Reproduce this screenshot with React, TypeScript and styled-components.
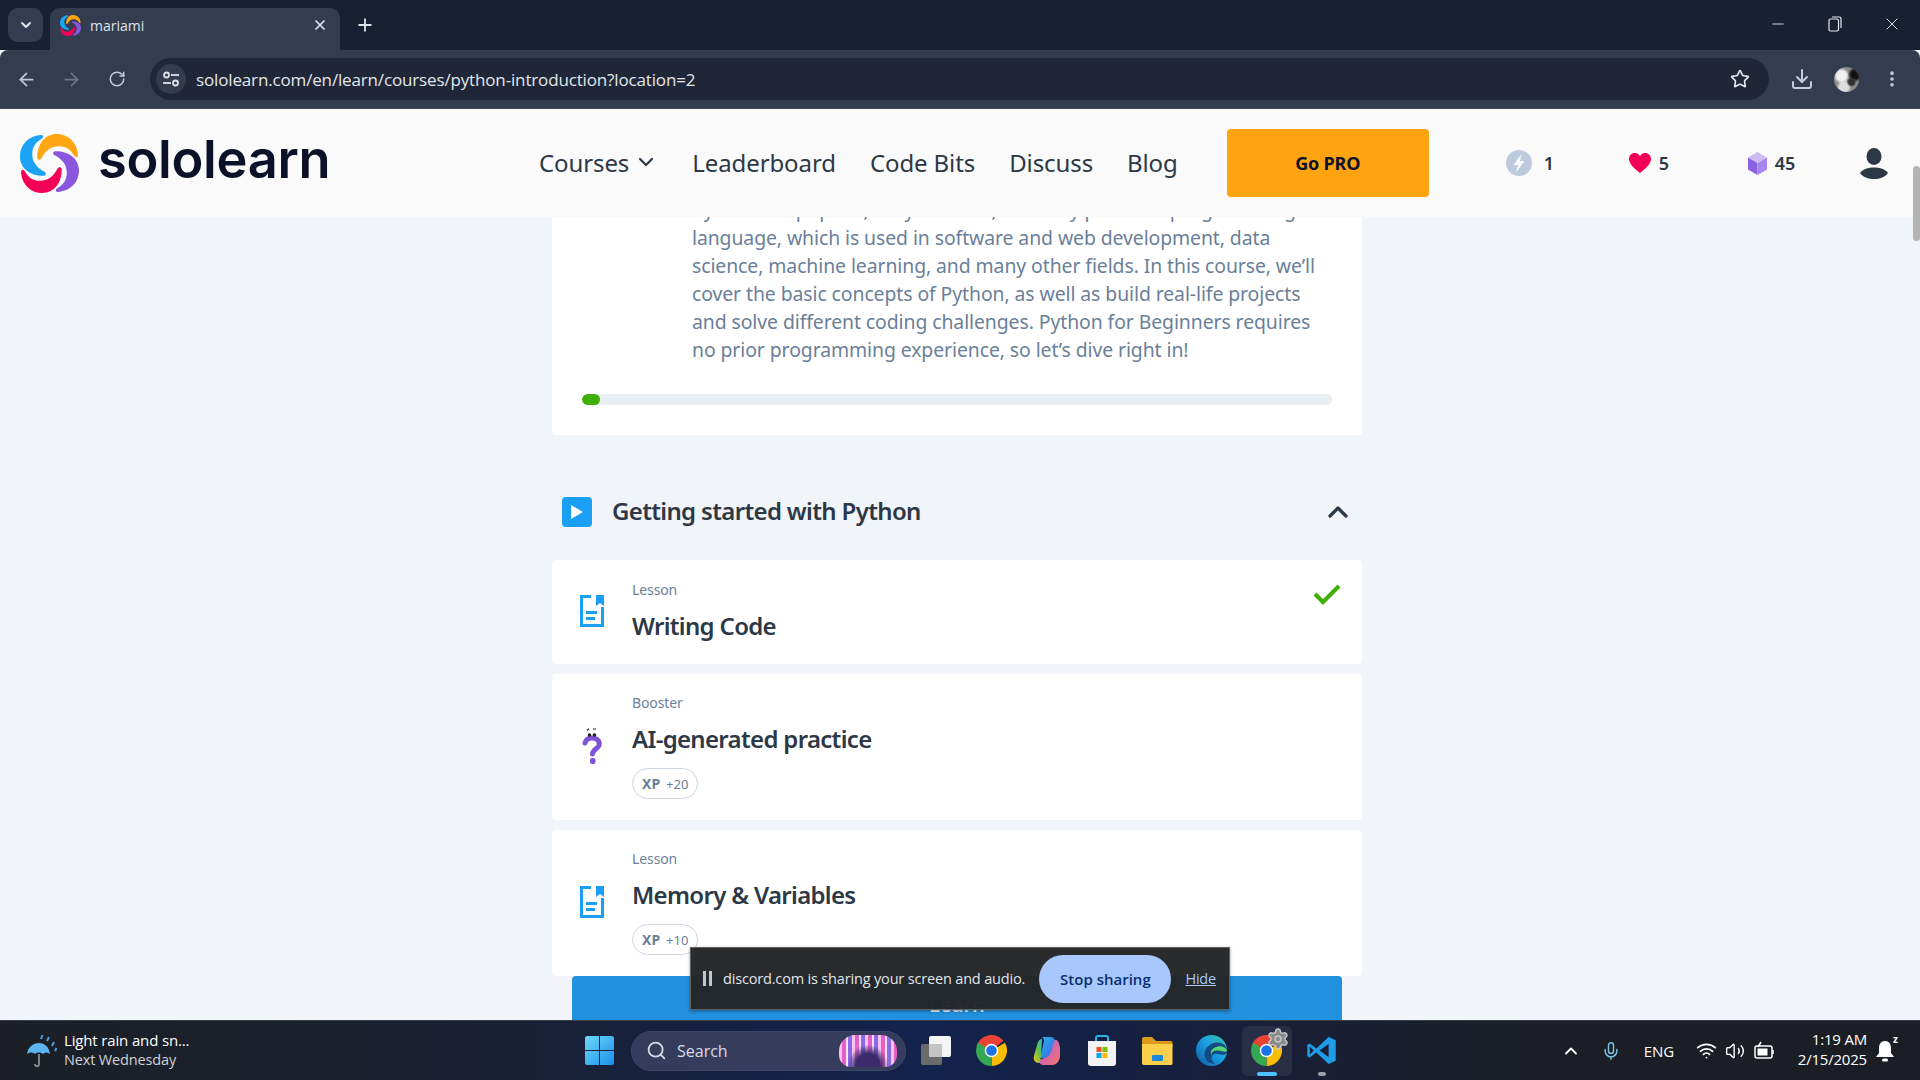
import React from "react";
import styled, { createGlobalStyle } from "styled-components";
import { ArrowLeft, ArrowRight, RotateCw, Star, Download, EllipsisVertical, X, Plus, ChevronDown, ChevronUp, Minus, Search, Mic, Wifi, Volume2, Settings } from "lucide-react";

const Global = createGlobalStyle`
  html, body { margin: 0; padding: 0; height: 100%; overflow: hidden; background: #f1f4f8; }
  #root { height: 100%; }
  * { box-sizing: border-box; }
`;

const sysFont = `"Open Sans", "Noto Sans", sans-serif`;
const siteFont = `"Noto Sans", "Open Sans", sans-serif`;

const Window = styled.div`
  height: 100vh; display: flex; flex-direction: column; overflow: hidden;
  font-family: ${siteFont};
`;
const TabStrip = styled.div`
  height: 50px; flex: none; display: flex; background: #182132; padding-left: 8px; color: #dfe3ea;
`;
const TabMenu = styled.div`
  width: 35px; height: 34px; margin-top: 8px; border-radius: 10px; background: #343d4f;
  display: flex; align-items: center; justify-content: center;
`;
const Tab = styled.div`
  width: 290px; height: 42px; margin: 8px 0 0 7px; background: #343d4f; border-radius: 10px 10px 0 0;
  display: flex; align-items: center; padding: 0 12px 8px 10px; gap: 9px;
  font: 400 14px ${sysFont}; color: #dfe3ea;
`;
const TabTitle = styled.span`flex: 1;`;
const NewTab = styled.div`
  width: 50px; height: 42px; margin-top: 4px; display: flex; align-items: center; justify-content: center;
`;
const Spacer = styled.div`flex: 1;`;
const WinControls = styled.div`
  display: flex; height: 50px; color: #e8ebf0;
`;
const WinButton = styled.div`
  width: 57px; display: flex; align-items: center; justify-content: center; padding-bottom: 2px;
`;
const Toolbar = styled.div`
  height: 59px; flex: none; background: #343d4f; border-bottom: 1px solid #3b4352; display: flex;
  padding: 8px 0 0 4px; border-radius: 8px 8px 0 0; color: #c4cad6;
`;
const NavIcon = styled.div<{ $dim?: boolean }>`
  width: 45px; height: 42px; display: flex; align-items: center; justify-content: center;
  color: ${p => (p.$dim ? "#6d7585" : "#c4cad6")};
`;
const AddressBar = styled.div`
  width: 1619px; height: 42px; margin-left: 11px; background: #1e2637; border-radius: 21px;
  display: flex; align-items: center; padding: 0 19px 0 6px; color: #e3e6ec;
  font: 400 17px ${sysFont};
`;
const SiteInfo = styled.div`
  width: 30px; height: 30px; border-radius: 50%; background: #343d4f; display: flex; align-items: center; justify-content: center;
  margin-right: 10px;
`;
const Url = styled.span`flex: 1; letter-spacing: -0.15px;`;
const ToolIcons = styled.div`
  display: flex; align-items: center; height: 42px; margin-left: 15px; gap: 10px;
`;
const ToolIcon = styled.div`
  width: 35px; display: flex; align-items: center; justify-content: center;
`;
const Avatar = styled.div`
  width: 25px; height: 25px; border-radius: 50%;
  background:
    radial-gradient(circle at 70% 60%, #333 0 12%, transparent 22%),
    radial-gradient(circle at 85% 30%, #111 0 15%, transparent 28%),
    radial-gradient(circle at 30% 35%, #f2f2f2 0 20%, transparent 34%),
    radial-gradient(circle at 40% 80%, #ddd 0 18%, transparent 30%),
    #8a8a8a;
`;

const Page = styled.div`
  flex: 1; min-height: 0; position: relative; display: flex; flex-direction: column; overflow: hidden; background: #f1f4f8;
`;
const SiteHeader = styled.header`
  height: 108px; flex: none; background: #fafafa; position: relative; z-index: 2; display: flex; align-items: center; padding-left: 20px;
`;
const Logo = styled.div`
  display: flex; align-items: center; width: 519px; gap: 19px;
`;
const Wordmark = styled.span`
  font: 600 52.4px Inter, sans-serif; color: #0a1128; letter-spacing: -0.3px; line-height: 60px; margin-top: -8px;
`;
const Nav = styled.nav`
  display: flex; align-items: center; gap: 34px; font: 400 24px ${siteFont}; color: #2d3846; letter-spacing: -0.1px; padding-bottom: 2px;
`;
const NavItem = styled.span`display: flex; align-items: center; gap: 5px;`;
const GoPro = styled.div`
  width: 202px; height: 68px; margin-left: 49px; background: #ffa310; border-radius: 4px; color: #0d1326;
  display: flex; align-items: center; justify-content: center; font: 700 18px ${siteFont}; letter-spacing: -0.2px;
`;
const Stat = styled.div<{ $w: number; $gap: number }>`
  width: ${p => p.$w}px; display: flex; align-items: center; gap: ${p => p.$gap}px; font: 600 18px ${siteFont}; color: #2d3846;
`;
const Stats = styled.div`
  display: flex; align-items: center; margin-left: 77px;
`;
const Scroller = styled.main`
  flex: 1; min-height: 0; overflow: hidden; padding-right: 6px;
`;
const Column = styled.div`
  width: 810px; margin: -21px auto 0;
`;
const IntroCard = styled.section`
  background: #fff; border-radius: 4px; padding: 0 30px 30px;
`;
const IntroText = styled.p`
  margin: 0 0 0 110px; font: 400 19.4px/28px ${siteFont}; color: #6b7f99; letter-spacing: -0.08px; width: 636px;
`;
const ProgressTrack = styled.div`
  height: 11px; margin-top: 30px; background: #e9eef3; border-radius: 6px; overflow: hidden;
`;
const ProgressFill = styled.div`
  height: 100%; background: #3fb005; border-radius: 6px;
`;
const SectionHead = styled.div`
  height: 30px; margin-top: 62px; padding: 0 8px 0 10px; display: flex; align-items: center; gap: 20px;
  color: #2d3846;
`;
const SectionTitle = styled.h2`
  flex: 1; margin: 0; padding-bottom: 3px; font: 600 24px ${siteFont}; letter-spacing: -0.66px;
`;
const PlayBox = styled.div`
  width: 30px; height: 30px; border-radius: 4px; background: #1a9ff4; display: flex; align-items: center; justify-content: center;
`;
const Lessons = styled.div`
  margin-top: 33px; display: flex; flex-direction: column; gap: 10px;
`;
const LessonCard = styled.article`
  position: relative; background: #fff; border-radius: 4px; min-height: 104px; display: flex; align-items: center; gap: 28px;
  padding: 19px 28px 21px;
`;
const LessonBody = styled.div`display: flex; flex-direction: column; align-items: flex-start;`;
const LessonKind = styled.span`
  font: 400 14px/20px ${siteFont}; color: #6b7f99; letter-spacing: -0.1px;
`;
const LessonName = styled.h3`
  margin: 9px 0 0; font: 600 24px/34px ${siteFont}; color: #2d3846; letter-spacing: -0.68px;
`;
const XpBadge = styled.div`
  height: 31px; margin-top: 12px; padding: 0 9px; border: 1px solid #cdd6e0; border-radius: 16px;
  display: flex; align-items: center; gap: 6px; font: 400 13px ${siteFont}; color: #6b7f99;
`;
const XpLabel = styled.b`font-weight: 700; font-size: 14px;`;
const DoneMark = styled.div`
  position: absolute; right: 21px; top: 24px; color: #3fb005; display: flex;
`;
const LearnBar = styled.div`
  position: absolute; left: 572px; bottom: 0; width: 770px; height: 44px; background: #2190de; border-radius: 4px 4px 0 0;
  display: flex; justify-content: center; padding-top: 15px; color: #e8f2fb; font: 600 20px ${siteFont}; z-index: 1;
`;
const ShareBar = styled.div`
  position: absolute; left: 690px; bottom: 10px; width: 540px; height: 63px; z-index: 3; background: rgba(34, 36, 38, 0.97);
  border: 1.5px solid #5f6163; box-shadow: 0 1px 3px rgba(0,0,0,.4); display: flex; align-items: center; padding: 0 13px 0 12px;
  font: 400 14.5px ${sysFont}; color: #e4e6e8;
`;
const PauseGlyph = styled.div`
  width: 9px; height: 15px; border-left: 3px solid #c4c6c8; border-right: 3px solid #c4c6c8; margin-right: 11px;
`;
const ShareText = styled.span`flex: 1; letter-spacing: -0.17px; white-space: nowrap;`;
const StopButton = styled.div`
  width: 132px; height: 48px; border-radius: 24px; background: #a8c7fa; color: #062e6f; font-weight: 600; font-size: 15px;
  display: flex; align-items: center; justify-content: center; margin-right: 14px; letter-spacing: 0;
`;
const HideLink = styled.span`
  color: #a8c7fa; text-decoration: underline; font-size: 14.5px; letter-spacing: -0.2px;
`;
const ScrollThumb = styled.div`
  position: absolute; right: 0; top: 57px; width: 7px; height: 75px; background: #b4b4b4; border-radius: 4px; z-index: 4;
`;

const Taskbar = styled.footer`
  height: 60px; flex: none; border-top: 1px solid #3a3f4a; display: flex; align-items: center;
  background: linear-gradient(90deg, #1b1f25 0%, #1a2030 22%, #12234d 48%, #181f38 66%, #1b1e25 80%, #1b1e25 100%);
  color: #fff; font-family: ${sysFont};
`;
const Weather = styled.div`
  flex: none; width: 585px; padding-left: 25px; display: flex; align-items: center; gap: 7px;
`;
const WeatherText = styled.div`
  display: flex; flex-direction: column; font-size: 15px; line-height: 20px; letter-spacing: -0.15px; color: #fff; padding-bottom: 2px;
`;
const WeatherSub = styled.span`color: #cfd2d8; font-size: 14.5px;`;
const SearchPill = styled.div`
  flex: none; width: 275px; height: 40px; margin: 0 3px 0 17px; border-radius: 20px; background: #353c5c; border: 1px solid #3f4769;
  display: flex; align-items: center; padding: 0 8px 0 14px; gap: 10px; color: #d9dce6; font-size: 16px;
`;
const SearchWord = styled.span`flex: 1;`;
const SearchArt = styled.div`
  width: 58px; height: 32px; border-radius: 16px 16px 12px 12px;
  background:
    radial-gradient(ellipse at 50% 100%, #3b2a6b 0 30%, transparent 50%),
    repeating-linear-gradient(90deg, #f6c3ee 0 3px, #e55fc6 3px 7px, #ffe2f4 7px 9px, #8a6ae6 9px 13px),
    #9fb4dd;
`;
const Dock = styled.div`
  flex: none; display: flex; align-items: center;
`;
const DockItem = styled.div<{ $active?: boolean }>`
  width: ${p => (p.$active ? 50 : 55)}px; margin: 0 ${p => (p.$active ? 2.5 : 0)}px;
  height: 50px; display: flex; align-items: center; justify-content: center; position: relative;
  border-radius: 6px; background: ${p => (p.$active ? "rgba(255,255,255,.07)" : "transparent")};
`;
const RunDot = styled.div<{ $color: string; $w: number }>`
  position: absolute; bottom: 0; left: 50%; transform: translateX(-50%); height: 3.5px; width: ${p => p.$w}px; border-radius: 2px; background: ${p => p.$color};
`;
const GearBadge = styled.div`
  position: absolute; right: 2px; top: 1px; width: 24px; height: 24px; color: #8a8a8a; display: flex;
`;
const Tray = styled.div`
  flex: 1; display: flex; align-items: center; padding-left: 202px; color: #fff; font-size: 15px;
`;
const TrayIcon = styled.div<{ $w: number }>`
  flex: none; width: ${p => p.$w}px; display: flex; align-items: center; justify-content: center;
`;
const Clock = styled.div`
  flex: none; width: 82px; padding-bottom: 4px; text-align: right; line-height: 20px; font-size: 15px; letter-spacing: -0.2px; white-space: nowrap;
`;
const BellWrap = styled.div`
  position: relative; display: flex; margin-right: 2px;
`;
const BellZ = styled.span`
  position: absolute; right: -3px; top: -5px; font-size: 10px; font-weight: 700; line-height: 10px; color: #fff;
`;

const Swirl = ({ size }: { size: number }) => {
  const petal = "M20 1C8 2 0 11 0 22C0 33 9 41 23 41C26 41 26 38 24 37C16 33 12 27 12 20C12 12 16 8 21 5C24 3 23 1 20 1Z";
  return (
    <svg width={size} height={size} viewBox="0 0 58 58">
      <path d={petal} fill="#1aa3f5" />
      <path d={petal} fill="#ffa613" transform="rotate(90 29 29)" />
      <path d={petal} fill="#8a56de" transform="rotate(180 29 29)" />
      <path d={petal} fill="#f40055" transform="rotate(270 29 29)" />
    </svg>
  );
};

const DocIcon = () => (
  <svg width="24" height="32" viewBox="0 0 24 32" fill="none">
    <path d="M11 1.5H1.5V30.5H22.5V12" stroke="#1a9ff4" strokeWidth="3" />
    <path d="M16 0H24V11L20 8L16 11Z" fill="#1a9ff4" />
    <rect x="6" y="16" width="11" height="3" fill="#1a9ff4" />
    <rect x="6" y="22" width="9" height="3" fill="#1a9ff4" />
  </svg>
);
const BoosterIcon = () => (
  <svg width="24" height="36" viewBox="0 0 24 36" fill="none">
    <path d="M5 15C6 11 9 9.5 13 10C18 10.500 20 14 19 17.500C18 20.500 13 21 12.500 26" stroke="#8052d8" strokeWidth="5" strokeLinecap="round" />
    <rect x="10" y="30" width="5.500" height="6" rx="2" fill="#8052d8" />
    <circle cx="9.500" cy="7" r="1.800" fill="#222" />
    <circle cx="14.500" cy="7" r="1.800" fill="#222" />
    <path d="M7 2.500L9 0.800M13 1H16" stroke="#222" strokeWidth="1.200" />
  </svg>
);
const BoltBadge = () => (
  <svg width="26" height="26" viewBox="0 0 26 26">
    <circle cx="13" cy="13" r="13" fill="#bdcadb" />
    <path d="M15.5 4L7.5 15H12L10 22.5L18.5 11H14Z" fill="#fafafa" />
  </svg>
);
const HeartBadge = () => (
  <svg width="22" height="20" viewBox="0 0 22 20">
    <path d="M11 20C5 15 0 11 0 6C0 2.5 2.5 0 5.7 0C8 0 9.9 1.2 11 3.2C12.1 1.2 14 0 16.3 0C19.5 0 22 2.5 22 6C22 11 17 15 11 20Z" fill="#f40055" />
  </svg>
);
const CubeBadge = () => (
  <svg width="19" height="23" viewBox="0 0 19 23">
    <path d="M9.5 0L19 5.5L9.5 11L0 5.5Z" fill="#cdbdf3" />
    <path d="M0 5.5L9.5 11V23L0 17.5Z" fill="#8a60e4" />
    <path d="M19 5.5L9.5 11V23L19 17.5Z" fill="#a585ee" />
  </svg>
);
const UserIcon = () => (
  <svg width="28" height="31" viewBox="0 0 28 31">
    <ellipse cx="14" cy="8.5" rx="7.5" ry="8.5" fill="#2d3846" />
    <path d="M0 25C3 21 8 19.5 14 19.5C20 19.5 25 21 28 25C25 29 20 31 14 31C8 31 3 29 0 25Z" fill="#2d3846" />
  </svg>
);
const ChromeLogo = () => (
  <svg width="31" height="31" viewBox="0 0 48 48">
    <g fill="none" strokeWidth="17">
      <circle cx="24" cy="24" r="15.5" pathLength="3" stroke="#ea4335" strokeDasharray="1.05 1.95" transform="rotate(-165 24 24)" />
      <circle cx="24" cy="24" r="15.5" pathLength="3" stroke="#fbbc04" strokeDasharray="1 2" transform="rotate(-30 24 24)" />
      <circle cx="24" cy="24" r="15.5" pathLength="3" stroke="#34a853" strokeDasharray="1 2" transform="rotate(90 24 24)" />
    </g>
    <circle cx="24" cy="24" r="10.5" fill="#fff" />
    <circle cx="24" cy="24" r="8.2" fill="#1a73e8" />
  </svg>
);
const Copilot = () => (
  <svg width="30" height="30" viewBox="0 0 30 30">
    <defs>
      <linearGradient id="cpA" x1="0" y1="0" x2="1" y2="1"><stop offset="0" stopColor="#2bb6f0" /><stop offset="1" stopColor="#3b5fe0" /></linearGradient>
      <linearGradient id="cpB" x1="0" y1="1" x2="1" y2="0"><stop offset="0" stopColor="#f8c21d" /><stop offset=".5" stopColor="#5fc04a" /><stop offset="1" stopColor="#2bb6f0" /></linearGradient>
      <linearGradient id="cpC" x1="0" y1="0" x2="1" y2="1"><stop offset="0" stopColor="#b25ce0" /><stop offset="1" stopColor="#f5736a" /></linearGradient>
    </defs>
    <path d="M10 1H19C22 1 23 4 24 8L20 22H8L12 5C12 3 11 1 10 1Z" fill="url(#cpA)" />
    <path d="M10 3C7 3 6 6 5 9L2 20C1 24 3 27 7 27H12C9 26 8 24 9 20Z" fill="url(#cpB)" />
    <path d="M20 29H11C8 29 7 26 8 24L12 22C17 22 20 15 21 8L23 4C25 3 27 6 28 11L28 21C27 26 24 29 20 29Z" fill="url(#cpC)" />
  </svg>
);
const StoreBag = () => (
  <svg width="30" height="32" viewBox="0 0 30 32">
    <path d="M9 7V3C9 1.5 10 1 11 1H19C20 1 21 1.5 21 3V7" fill="none" stroke="#27b4e8" strokeWidth="2" />
    <path d="M1 6H29V28C29 30 28 31 26 31H4C2 31 1 30 1 28Z" fill="#f1f3f5" />
    <rect x="9.5" y="12" width="5" height="5" fill="#f25022" />
    <rect x="15.5" y="12" width="5" height="5" fill="#7fba00" />
    <rect x="9.5" y="18" width="5" height="5" fill="#00a4ef" />
    <rect x="15.5" y="18" width="5" height="5" fill="#ffb900" />
  </svg>
);
const Folder = () => (
  <svg width="32" height="28" viewBox="0 0 32 28">
    <path d="M1 2C1 1 1.5 0 3 0H11L15 4H30C31 4 31.5 5 31.5 6V10H1Z" fill="#d99a1c" />
    <path d="M1 7H31.500V26C31.500 27 31 28 30 28H3C1.500 28 1 27 1 26Z" fill="#fcd04a" />
    <rect x="11" y="18" width="11" height="6" rx="1" fill="#1a86d8" />
  </svg>
);
const Edge = () => (
  <svg width="31" height="31" viewBox="0 0 32 32">
    <defs>
      <linearGradient id="edA" x1="0" y1="1" x2="1" y2="0"><stop offset="0" stopColor="#0c59a4" /><stop offset=".55" stopColor="#1ba1e2" /><stop offset="1" stopColor="#36c7a0" /></linearGradient>
    </defs>
    <circle cx="16" cy="16" r="16" fill="url(#edA)" />
    <path d="M32 17C32 10 26 7 20 8C13 9 8 15 9 22C10 27 14 30 20 30C16 27 15 24 17 21C18 19 22 19 25 20C29 21 32 20 32 17Z" fill="#134a86" />
    <path d="M32 16C31 13 27 11 22 12C16 13 14 18 16 22C15 18 18 16 22 16C27 16 31 19 32 16Z" fill="#5ad672" />
  </svg>
);
const VsCode = () => (
  <svg width="31" height="31" viewBox="0 0 48 48">
    <path fillRule="evenodd" d="M35 3L46 8V40L35 45L16 27L6 35L2 33V15L6 13L16 21ZM35 14L21 24L35 34ZM6 18V30L12 24Z" fill="#1f9ce8" />
  </svg>
);

export default function App() {
  return (
    <Window>
      <Global />
      <TabStrip>
        <TabMenu><ChevronDown size={16} strokeWidth={3} /></TabMenu>
        <Tab>
          <Swirl size={21} />
          <TabTitle>mariami</TabTitle>
          <X size={16} strokeWidth={2.6} />
        </Tab>
        <NewTab><Plus size={20} strokeWidth={2.2} /></NewTab>
        <Spacer />
        <WinControls>
          <WinButton><Minus size={18} strokeWidth={1.2} /></WinButton>
          <WinButton>
            <svg width="14" height="16" viewBox="0 0 14 16" fill="none" stroke="#e8ebf0" strokeWidth="1.2">
              <rect x="1" y="3" width="9.5" height="12" rx="1.5" />
              <path d="M4 1H11.500C12.500 1 13 1.500 13 2.500V12" />
            </svg>
          </WinButton>
          <WinButton><X size={20} strokeWidth={1.1} /></WinButton>
        </WinControls>
      </TabStrip>

      <Toolbar>
        <NavIcon><ArrowLeft size={21} strokeWidth={2} /></NavIcon>
        <NavIcon $dim><ArrowRight size={21} strokeWidth={2} /></NavIcon>
        <NavIcon><RotateCw size={18} strokeWidth={2} /></NavIcon>
        <AddressBar>
          <SiteInfo>
            <svg width="18" height="16" viewBox="0 0 18 16" fill="none" stroke="#dfe3ea" strokeWidth="1.8">
              <circle cx="4.500" cy="4" r="2.500" /><path d="M9 4H17" />
              <circle cx="13.500" cy="12" r="2.500" /><path d="M1 12H9" />
            </svg>
          </SiteInfo>
          <Url>sololearn.com/en/learn/courses/python-introduction?location=2</Url>
          <Star size={20} strokeWidth={2} />
        </AddressBar>
        <ToolIcons>
          <ToolIcon><Download size={24} strokeWidth={2} /></ToolIcon>
          <ToolIcon><Avatar /></ToolIcon>
          <ToolIcon><EllipsisVertical size={20} strokeWidth={2.4} /></ToolIcon>
        </ToolIcons>
      </Toolbar>

      <Page>
        <SiteHeader>
          <Logo>
            <Swirl size={59} />
            <Wordmark>sololearn</Wordmark>
          </Logo>
          <Nav>
            <NavItem>Courses <ChevronDown size={24} strokeWidth={2.2} /></NavItem>
            <NavItem>Leaderboard</NavItem>
            <NavItem>Code Bits</NavItem>
            <NavItem>Discuss</NavItem>
            <NavItem>Blog</NavItem>
          </Nav>
          <GoPro>Go PRO</GoPro>
          <Stats>
            <Stat $w={123} $gap={12}><BoltBadge />1</Stat>
            <Stat $w={119} $gap={8}><HeartBadge />5</Stat>
            <Stat $w={112} $gap={8}><CubeBadge />45</Stat>
            <UserIcon />
          </Stats>
        </SiteHeader>
        <Scroller>
          <Column>
            <IntroCard>
              <IntroText>
                Python is a popular, easy-to-learn, and very powerful programming language, which is used in software and web development, data science, machine learning, and many other fields. In this course, we’ll cover the basic concepts of Python, as well as build real-life projects and solve different coding challenges. Python for Beginners requires no prior programming experience, so let’s dive right in!
              </IntroText>
              <ProgressTrack><ProgressFill style={{ width: "2.4%" }} /></ProgressTrack>
            </IntroCard>
            <SectionHead>
              <PlayBox>
                <svg width="12" height="14" viewBox="0 0 12 14"><path d="M0 0L12 7L0 14Z" fill="#fff" /></svg>
              </PlayBox>
              <SectionTitle>Getting started with Python</SectionTitle>
              <ChevronUp size={32} strokeWidth={2.4} />
            </SectionHead>
            <Lessons>
              <LessonCard>
                <DocIcon />
                <LessonBody>
                  <LessonKind>Lesson</LessonKind>
                  <LessonName>Writing Code</LessonName>
                </LessonBody>
                <DoneMark>
                  <svg width="28" height="21" viewBox="0 0 28 21" fill="none"><path d="M2 10L10 18L26 2" stroke="currentColor" strokeWidth="4.2" /></svg>
                </DoneMark>
              </LessonCard>
              <LessonCard>
                <BoosterIcon />
                <LessonBody>
                  <LessonKind>Booster</LessonKind>
                  <LessonName>AI-generated practice</LessonName>
                  <XpBadge><XpLabel>XP</XpLabel> +20</XpBadge>
                </LessonBody>
              </LessonCard>
              <LessonCard>
                <DocIcon />
                <LessonBody>
                  <LessonKind>Lesson</LessonKind>
                  <LessonName>Memory &amp; Variables</LessonName>
                  <XpBadge><XpLabel>XP</XpLabel> +10</XpBadge>
                </LessonBody>
              </LessonCard>
            </Lessons>
          </Column>
        </Scroller>
        <LearnBar>Learn</LearnBar>
        <ShareBar>
          <PauseGlyph />
          <ShareText>discord.com is sharing your screen and audio.</ShareText>
          <StopButton>Stop sharing</StopButton>
          <HideLink>Hide</HideLink>
        </ShareBar>
        <ScrollThumb />
      </Page>

      <Taskbar>
        <Weather>
          <svg width="32" height="34" viewBox="0 0 32 34" fill="none">
            <path d="M2 20C3 13 8 9 14 9C20 9 24 13 25 20C22 18 20 18 18 20C16 18 12 18 10 20C7 18 5 18 2 20Z" fill="#5db4f0" />
            <path d="M14 20V30C14 33 10 33 10 30" stroke="#8d8d8d" strokeWidth="1.8" />
            <path d="M16 5L17.500 1M22 7L24 3M27 12L29 8M30 17L31.500 14" stroke="#4d9fdc" strokeWidth="2" />
          </svg>
          <WeatherText>
            <span>Light rain and sn...</span>
            <WeatherSub>Next Wednesday</WeatherSub>
          </WeatherText>
        </Weather>
        <svg width="29" height="29" viewBox="0 0 29 29">
          <defs><linearGradient id="winG" x1="0" y1="0" x2="1" y2="1"><stop offset="0" stopColor="#6fd8fb" /><stop offset="1" stopColor="#1a8fea" /></linearGradient></defs>
          <path d="M0 2C0 1 1 0 2 0H14V14H0ZM15 0H27C28 0 29 1 29 2V14H15ZM0 15H14V29H2C1 29 0 28 0 27ZM15 15H29V27C29 28 28 29 27 29H15Z" fill="url(#winG)" />
        </svg>
        <SearchPill>
          <Search size={21} strokeWidth={2} />
          <SearchWord>Search</SearchWord>
          <SearchArt />
        </SearchPill>
        <Dock>
          <DockItem>
            <svg width="31" height="30" viewBox="0 0 31 30">
              <rect x="8" y="0" width="22" height="21" rx="2" fill="#f4f4f4" />
              <rect x="0" y="8" width="21" height="21" rx="2" fill="#6b6b6b" />
              <rect x="8" y="8" width="13" height="13" fill="#c4c4c4" />
            </svg>
          </DockItem>
          <DockItem><ChromeLogo /></DockItem>
          <DockItem><Copilot /></DockItem>
          <DockItem><StoreBag /></DockItem>
          <DockItem><Folder /></DockItem>
          <DockItem><Edge /></DockItem>
          <DockItem $active>
            <ChromeLogo />
            <GearBadge><Settings size={24} fill="currentColor" stroke="#c9c9c9" strokeWidth={1.4} /></GearBadge>
            <RunDot $color="#4cc2ff" $w={20} />
          </DockItem>
          <DockItem><VsCode /><RunDot $color="#9aa0a8" $w={8} /></DockItem>
        </Dock>
        <Tray>
          <TrayIcon $w={40}><ChevronUp size={20} strokeWidth={2.2} /></TrayIcon>
          <TrayIcon $w={40}><Mic size={20} color="#7cc6e8" strokeWidth={1.7} /></TrayIcon>
          <TrayIcon $w={56}>ENG</TrayIcon>
          <TrayIcon $w={38}><Wifi size={21} strokeWidth={2} /></TrayIcon>
          <TrayIcon $w={20}><Volume2 size={20} strokeWidth={1.7} /></TrayIcon>
          <TrayIcon $w={40}>
            <svg width="22" height="20" viewBox="0 0 22 20" fill="none" stroke="#fff" strokeWidth="1.5">
              <rect x="1" y="5" width="17" height="12" rx="2" /><rect x="3.500" y="7.500" width="10" height="7" fill="#fff" stroke="none" />
              <path d="M19 9V13M7 1L4 6" />
            </svg>
          </TrayIcon>
          <Clock>1:19 AM<br />2/15/2025</Clock>
          <TrayIcon $w={38}>
            <BellWrap>
              <svg width="20" height="24" viewBox="0 0 20 24" fill="#fff">
                <path d="M10 2C6 2 4 5 4 9V14L1 18H19L16 14V9C16 5 14 2 10 2Z" />
                <rect x="7" y="19.500" width="6" height="3" rx="1.500" />
              </svg>
              <BellZ>z</BellZ>
            </BellWrap>
          </TrayIcon>
        </Tray>
      </Taskbar>
    </Window>
  );
}
